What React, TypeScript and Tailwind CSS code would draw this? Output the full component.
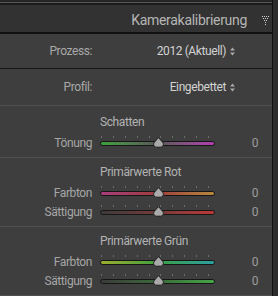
import React from "react";

const ticks = [0, 1, 2, 3, 4, 5, 6, 7, 8, 9];

const Thumb = () => (
  <svg className="absolute left-[53px] top-[4px]" width="11" height="11" viewBox="0 0 11 11">
    <path
      d="M5.5 0.6 L9.6 5.2 Q10.4 6.2 10.4 7.4 Q10.4 10.2 7.8 10.2 L3.2 10.2 Q0.6 10.2 0.6 7.4 Q0.6 6.2 1.4 5.2 Z"
      fill="#a9a9a9"
      stroke="#1b1b1b"
      strokeWidth="1"
    />
  </svg>
);

const Slider = ({ track }: { track: string }) => (
  <div className="relative w-[115px] h-[19px] shrink-0">
    <div className="absolute left-[1px] top-[3px] w-[108px] flex justify-between">
      {ticks.map((t) => (
        <span key={t} className="w-px h-[2px] bg-[#6c6c6c]" />
      ))}
    </div>
    <div className={"absolute left-0 right-0 top-[8px] h-[5px] rounded-full border border-[#161616] " + track} />
    <Thumb />
  </div>
);

const SliderRow = ({ label, track }: { label: string; track: string }) => (
  <div className="flex items-center h-[19px]">
    <span className="w-[92px] text-right text-[#a6a6a6]">{label}</span>
    <span className="w-[8px]" />
    <Slider track={track} />
    <span className="w-[43px] text-right text-[#9c9c9c]">0</span>
  </div>
);

const Section = ({ title, top, children }: { title: string; top: string; children: React.ReactNode }) => (
  <div className={"pb-[5px] border-b border-[#4f4f4f] " + top}>
    <div className="h-[16px] flex items-center pl-[100px] text-[#b3b3b3]">{title}</div>
    <div className="mt-[3px]">{children}</div>
  </div>
);

const UpDown = () => (
  <svg className="ml-[4px]" width="5" height="9" viewBox="0 0 5 9">
    <path d="M2.5 0.5 L5 3.5 L0 3.5 Z" fill="#a8a8a8" />
    <path d="M0 5.5 L5 5.5 L2.5 8.5 Z" fill="#a8a8a8" />
  </svg>
);

const SelectRow = ({ label, value, row }: { label: string; value: string; row: string }) => (
  <div className={"flex items-center border-b " + row}>
    <span className="w-[92px] text-right text-[#a8a8a8]">{label}</span>
    <div className="flex-1 flex items-center justify-end pr-[37px] text-[#d2d2d2]">
      <span>{value}</span>
      <UpDown />
    </div>
  </div>
);

const DotTriangle = () => {
  const dots: [number, number][] = [
    [0, 0], [2, 0], [4, 0], [6, 0],
    [1, 2], [3, 2], [5, 2],
    [2, 4], [4, 4],
    [3, 6], [3, 8],
  ];
  return (
    <svg width="7" height="9" viewBox="0 0 7 9">
      {dots.map(([x, y], i) => (
        <rect key={i} x={x} y={y} width="1" height="1" fill="#d0d0d0" />
      ))}
    </svg>
  );
};

export default function App() {
  return (
    <div className="w-[278px] h-[296px] flex bg-[#2d2d2d] overflow-hidden font-['Roboto',sans-serif] text-[12px] tracking-[-0.4px] leading-none">
      <div className="w-[273px] shrink-0 flex flex-col border-r border-[#111111] bg-[#3e3e3e]">
        <div className="h-[2px] bg-[#262626]" />
        <div className="h-px bg-[#565656]" />
        <div className="h-[2px] bg-[#1c1c1c]" />
        <div className="h-[29px] pt-[3px] bg-[#323232] flex items-center justify-end border-b-2 border-[#121212]">
          <span className="text-[14px] tracking-[-0.3px] text-[#b6b6b6]">Kamerakalibrierung</span>
          <div className="w-[25px] pl-[15px] flex items-center">
            <DotTriangle />
          </div>
        </div>
        <SelectRow label="Prozess:" value="2012 (Aktuell)" row="h-[35px] border-[#161616]" />
        <SelectRow label="Profil:" value="Eingebettet" row="h-[37px] border-[#4f4f4f]" />
        <Section title="Schatten" top="pt-[8px]">
          <SliderRow label="Tönung" track="bg-linear-to-r from-[#3aa03a] via-[#585858] to-[#b03cb0]" />
        </Section>
        <Section title="Primärwerte Rot" top="pt-[6px]">
          <SliderRow label="Farbton" track="bg-linear-to-r from-[#a83c7c] via-[#a03c3c] to-[#b4883e]" />
          <SliderRow label="Sättigung" track="bg-linear-to-r from-[#3a3a3a] via-[#743a3a] to-[#bc3636]" />
        </Section>
        <Section title="Primärwerte Grün" top="pt-[6px]">
          <SliderRow label="Farbton" track="bg-linear-to-r from-[#98ac2c] via-[#3ca03c] to-[#2c9ea0]" />
          <SliderRow label="Sättigung" track="bg-linear-to-r from-[#3a3a3a] via-[#3a6a3a] to-[#46a646]" />
        </Section>
      </div>
    </div>
  );
}
